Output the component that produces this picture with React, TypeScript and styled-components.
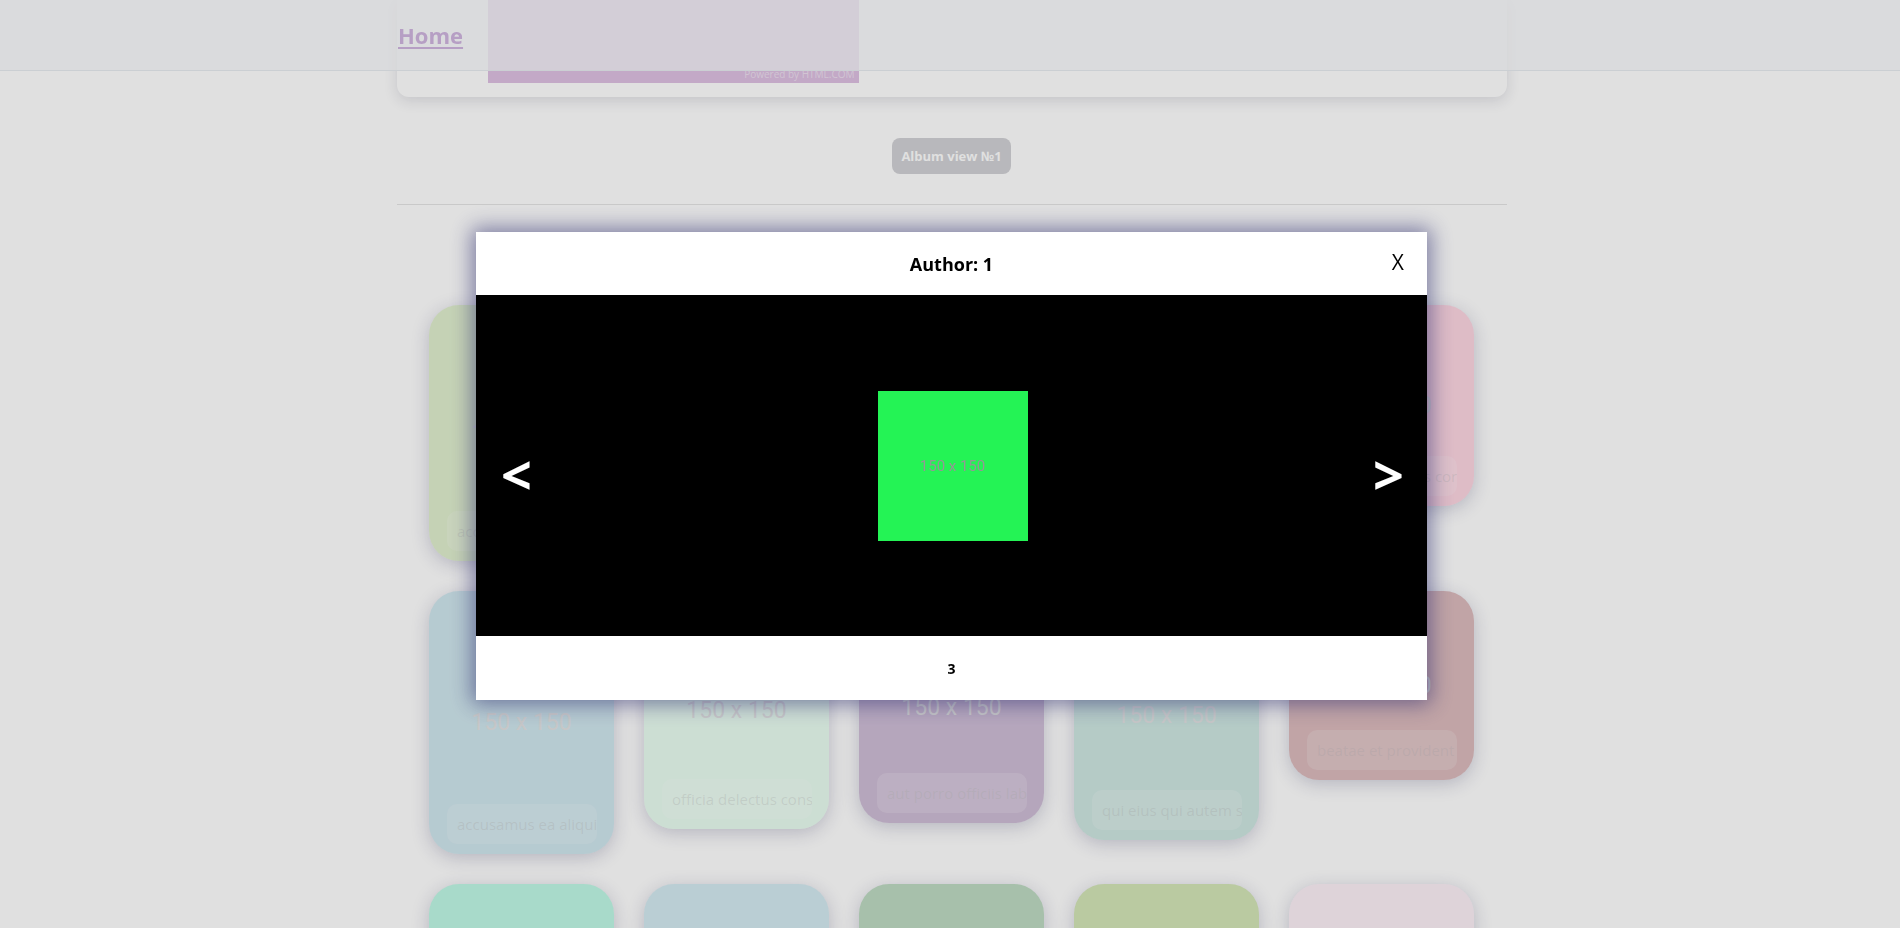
import React from "react";
import styled, { createGlobalStyle } from "styled-components";

const GlobalStyle = createGlobalStyle`
  html, body {
    margin: 0;
    padding: 0;
    background: #ffffff;
    font-family: "Open Sans", "Noto Sans", sans-serif;
    overflow: hidden;
  }
  * { box-sizing: border-box; }
`;

type Photo = { id: number; title: string; color: string; height: number };

const photos: Photo[] = [
  { id: 1, title: "accusamus beatae ad facilis cum similique qui sunt", color: "#92c952", height: 256 },
  { id: 2, title: "reprehenderit est deserunt velit ipsam", color: "#771796", height: 238 },
  { id: 3, title: "officia porro iure quia iusto qui ipsa ut modi", color: "#24f355", height: 226 },
  { id: 4, title: "culpa odio esse rerum omnis laboriosam voluptate repudiandae", color: "#d32776", height: 248 },
  { id: 5, title: "natus nisi omnis corporis facere molestiae rerum in", color: "#f66b97", height: 201 },
  { id: 6, title: "accusamus ea aliquid et amet sequi nemo", color: "#56a8c2", height: 263 },
  { id: 7, title: "officia delectus consequatur vero aut veniam explicabo molestias", color: "#b0f7cc", height: 238 },
  { id: 8, title: "aut porro officiis laborum odit ea laudantium corporis", color: "#54176f", height: 232 },
  { id: 9, title: "qui eius qui autem sed", color: "#51aa97", height: 249 },
  { id: 10, title: "beatae et provident et ut vel", color: "#810b14", height: 189 },
  { id: 11, title: "nihil at amet non hic quia qui", color: "#1ee8a4", height: 250 },
  { id: 12, title: "mollitia soluta ut rerum eos aliquam consequatur perspiciatis maiores", color: "#66b7d2", height: 240 },
  { id: 13, title: "repudiandae iusto deleniti rerum", color: "#197d29", height: 236 },
  { id: 14, title: "est necessitatibus architecto ut laborum", color: "#64a401", height: 250 },
  { id: 15, title: "harum dicta similique quis dolore earum ex qui", color: "#f9cee5", height: 228 },
];

const Page = styled.div`
  min-height: 100vh;
  padding-left: 3px;
  background: #ffffff;
`;

const TopBar = styled.header`
  position: fixed;
  top: 0;
  left: 0;
  right: 0;
  height: 71px;
  padding-left: 4px;
  background: rgba(247, 248, 251, 0.75);
  border-bottom: 1px solid #e8ecf1;
  z-index: 10;
`;

const BarInner = styled.nav`
  width: 1110px;
  height: 100%;
  margin: 0 auto;
  display: flex;
  align-items: center;
`;

const HomeLink = styled.a`
  font-family: "Open Sans", sans-serif;
  font-size: 22px;
  font-weight: 700;
  color: #d0b5e0;
  text-decoration: underline;
  text-underline-offset: 3px;
  padding-left: 1px;
  cursor: pointer;
`;

const Main = styled.main`
  width: 1110px;
  margin: 0 auto;
`;

const IntroCard = styled.section`
  height: 97px;
  padding-left: 91px;
  background: #ffffff;
  border-radius: 0 0 12px 12px;
  box-shadow: 0 4px 14px rgba(40, 40, 70, 0.14);
`;

const Banner = styled.div`
  width: 371px;
  height: 83px;
  background: #dec1e3;
  display: flex;
  align-items: flex-end;
  justify-content: flex-end;
  padding: 0 4px 2px 0;
`;

const Powered = styled.span`
  font-family: "Open Sans", sans-serif;
  font-size: 10px;
  color: rgba(255, 255, 255, 0.5);
`;

const Toolbar = styled.div`
  display: flex;
  justify-content: center;
  margin-top: 41px;
`;

const AlbumButton = styled.button`
  font-family: "Open Sans", sans-serif;
  font-size: 13px;
  font-weight: 700;
  line-height: 20px;
  color: #ffffff;
  background: #d2d2d6;
  border: none;
  border-radius: 8px;
  padding: 8px 9px;
  cursor: pointer;
`;

const Divider = styled.hr`
  margin: 30px 0 0;
  border: 0;
  border-top: 1px solid rgba(0, 0, 0, 0.1);
`;

const Grid = styled.div`
  margin-top: 100px;
  display: flex;
  flex-wrap: wrap;
  justify-content: center;
  align-items: flex-start;
  gap: 30px;
  padding-bottom: 60px;
`;

const Card = styled.article`
  position: relative;
  width: 185px;
  border-radius: 30px;
  overflow: hidden;
  box-shadow: 0 4px 18px rgba(40, 40, 90, 0.22);
  background: #ffffff;
`;

const CardPhoto = styled.div<{ $color: string }>`
  position: relative;
  background: ${(p) => p.$color};
  opacity: 0.28;
  display: flex;
  align-items: center;
  justify-content: center;
  font-family: Roboto, "Liberation Sans", sans-serif;
  font-size: 23px;
  color: #9a9a9a;
`;

const TitleBox = styled.div`
  position: absolute;
  left: 18px;
  right: 17px;
  bottom: 10px;
  height: 40px;
  border-radius: 10px;
  background: rgba(255, 255, 255, 0.16);
  display: flex;
  align-items: center;
  padding-left: 10px;
  overflow: hidden;
  white-space: nowrap;
  font-family: "Open Sans", sans-serif;
  font-size: 15px;
  color: rgba(0, 0, 0, 0.3);
`;

const Backdrop = styled.div`
  position: fixed;
  inset: 0;
  background: rgba(0, 0, 0, 0.12);
  display: flex;
  align-items: center;
  justify-content: center;
  padding: 4px 0 0 3px;
  z-index: 20;
`;

const Modal = styled.div`
  width: 951px;
  background: #ffffff;
  box-shadow: 0 0 20px 4px rgba(40, 40, 110, 0.55);
  display: flex;
  flex-direction: column;
`;

const ModalHeader = styled.div`
  height: 63px;
  display: grid;
  grid-template-columns: 1fr auto 1fr;
  align-items: center;
`;

const ModalTitle = styled.h2`
  margin: 0;
  font-family: "Open Sans", sans-serif;
  font-size: 18px;
  font-weight: 700;
  color: #000000;
`;

const CloseButton = styled.button`
  justify-self: end;
  margin-right: 23px;
  margin-bottom: 4px;
  background: none;
  border: none;
  padding: 0;
  font-family: "Open Sans", sans-serif;
  font-size: 21px;
  color: #000000;
  cursor: pointer;
`;

const Viewer = styled.div`
  height: 341px;
  background: #000000;
  display: grid;
  grid-template-columns: 1fr auto 1fr;
  align-items: center;
  padding: 0 23px 0 25px;
`;

const Arrow = styled.button<{ $side: "left" | "right" }>`
  justify-self: ${(p) => (p.$side === "left" ? "start" : "end")};
  background: none;
  border: none;
  padding: 0;
  margin-top: 16px;
  font-family: "Open Sans", sans-serif;
  font-size: 54px;
  font-weight: 700;
  line-height: 1;
  color: #ffffff;
  cursor: pointer;
`;

const BigPhoto = styled.div<{ $color: string }>`
  width: 150px;
  height: 150px;
  background: ${(p) => p.$color};
  display: flex;
  align-items: center;
  justify-content: center;
  font-family: Roboto, "Liberation Sans", sans-serif;
  font-size: 15px;
  color: #969696;
`;

const ModalFooter = styled.div`
  height: 64px;
  display: flex;
  align-items: center;
  justify-content: center;
`;

const PhotoId = styled.span`
  font-family: "Open Sans", sans-serif;
  font-size: 14px;
  font-weight: 700;
  color: #000000;
`;

export default function App() {
  const current = photos[2];
  return (
    <>
      <GlobalStyle />
      <Page>
        <TopBar>
          <BarInner>
            <HomeLink>Home</HomeLink>
          </BarInner>
        </TopBar>
        <Main>
          <IntroCard>
            <Banner>
              <Powered>Powered by HTML.COM</Powered>
            </Banner>
          </IntroCard>
          <Toolbar>
            <AlbumButton>Album view №1</AlbumButton>
          </Toolbar>
          <Divider />
          <Grid>
            {photos.map((p) => (
              <Card key={p.id}>
                <CardPhoto $color={p.color} style={{ height: p.height }}>
                  150 x 150
                  <TitleBox>{p.title}</TitleBox>
                </CardPhoto>
              </Card>
            ))}
          </Grid>
        </Main>
        <Backdrop>
          <Modal>
            <ModalHeader>
              <span />
              <ModalTitle>Author: 1</ModalTitle>
              <CloseButton>X</CloseButton>
            </ModalHeader>
            <Viewer>
              <Arrow $side="left">&lt;</Arrow>
              <BigPhoto $color={current.color}>150 x 150</BigPhoto>
              <Arrow $side="right">&gt;</Arrow>
            </Viewer>
            <ModalFooter>
              <PhotoId>{current.id}</PhotoId>
            </ModalFooter>
          </Modal>
        </Backdrop>
      </Page>
    </>
  );
}
